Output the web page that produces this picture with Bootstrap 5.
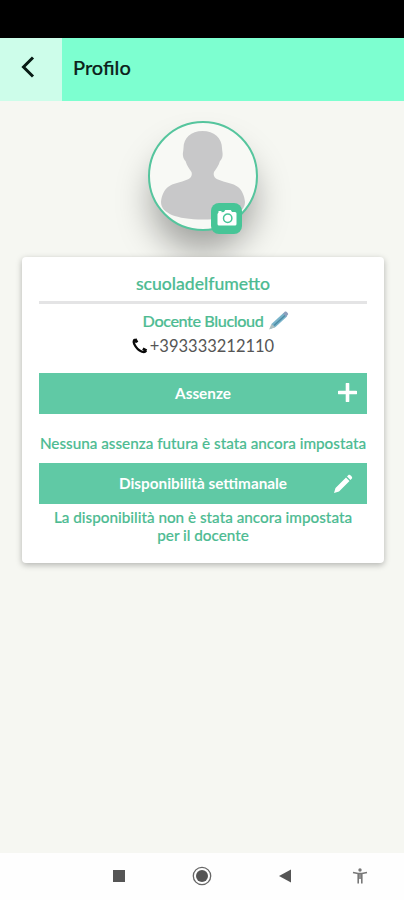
<!DOCTYPE html>
<html lang="it">
<head>
<meta charset="utf-8">
<meta name="viewport" content="width=device-width, initial-scale=1">
<title>Profilo</title>
<link href="https://cdn.jsdelivr.net/npm/bootstrap@5.3.0/dist/css/bootstrap.min.css" rel="stylesheet">
<style>
  body { font-family: Lato, "Open Sans", sans-serif; background: #f6f7f2; height: 900px; overflow: hidden; }
  svg { display: block; }
  .status-strip { height: 38px; background: #000; }
  .app-header { height: 62.5px; background: #7dffd0; }
  .back-btn { width: 62px; background: #cdfdea; border: 0; padding: 0 0 5px 19px; }
  .app-title { font-size: 20px; font-weight: 500; color: #0c211a; padding: 0 0 4px 11px; line-height: 24px; -webkit-text-stroke: .2px; }
  .avatar { width: 110px; height: 110px; margin: 20px 0 0 -2px; border: 2px solid #55c59d; background: #f8f9f5; box-shadow: 0 24px 34px -3px rgba(0,0,0,.34); }
  .photo-btn { width: 31px; height: 31px; left: 61px; top: 80px; background: #47c597; border: 0; border-radius: 8px; }
  .profile-card { margin: 26px 20px 0 22px; height: 306px; border: 0; border-radius: 4px; padding: 0 17px; background: #fff; box-shadow: 0 2px 6px rgba(0,0,0,.28); }
  .green { color: #4dbb92; }
  .school { font-size: 17.6px; font-weight: 500; line-height: 24px; padding: 15px 0 5px; border-bottom: 3px solid #e4e4e5; -webkit-text-stroke: .2px; }
  .teacher { font-size: 16.2px; letter-spacing: -.4px; font-weight: 500; line-height: 24px; margin-top: 5px; padding-left: 27px; -webkit-text-stroke: .2px; }
  .phone { font-size: 16.5px; line-height: 24px; color: #555; margin-top: 1px; padding-right: 1px; }
  .bar { height: 41px; background: #60c9a5; color: #fff; font-size: 15.3px; font-weight: 700; border: 0; border-radius: 0; }
  .bar svg { position: absolute; }
  .absences { margin-top: 15px; }
  .note { font-size: 15.28px; font-weight: 500; line-height: 18.500px; -webkit-text-stroke: .15px; }
  .note-absences { margin: 20px -10px 10.700px; }
  .note-week { margin-top: 4.300px; }
  .icon-plus { right: 10px; top: 10px; }
  .icon-edit { right: 14px; top: 11px; }
  .system-nav { height: 47px; background: #fefefe; padding: 0 0 1px 113px; }
</style>
</head>
<body class="d-flex flex-column">
<div class="status-strip flex-shrink-0"></div>
<header class="app-header d-flex flex-shrink-0">
  <button class="back-btn d-flex align-items-center" aria-label="Indietro">
    <svg width="18" height="24" viewBox="0 0 18 24"><path d="M14 2.500 4.500 12l9.500 9.500" fill="none" stroke="#071b14" stroke-width="3"/></svg>
  </button>
  <h1 class="app-title m-0 align-self-center">Profilo</h1>
</header>
<main class="flex-grow-1">
  <div class="d-flex justify-content-center ps-1">
    <div class="avatar rounded-circle position-relative">
      <svg width="106" height="106" viewBox="0 0 106 106">
        <path d="M52.500 8C41 8 33.500 15 33.500 25c0 3-1 5-.5 8 .4 2.500 1.500 4 2.500 5 1.500 5 4 8 6 11 1 3.500-.5 6-4 7.500-7 3-14.500 3.500-19.500 7.500-4 3-6.500 9-7 15 0 11 15 17.500 42 17.500S95 90 95 79c-.5-6-3-12-7-15-5-4-13-4.500-20-7.500-3.500-1.500-5-4-4-7.500 2-3 4.500-6 6-11 1-1 2.100-2.500 2.500-5 .5-3-.5-5-.5-8 0-10-8-17-19.500-17Z" fill="#c8c8c9"/>
      </svg>
      <button class="photo-btn position-absolute d-flex align-items-center justify-content-center p-0" aria-label="Cambia foto">
        <svg width="20" height="18" viewBox="0 0 20 18"><path d="M1.500 3.500V2h3v1.300L7 3l1.200-2h5.600L15 3h3a1.500 1.500 0 0 1 1.500 1.500V15a1.500 1.500 0 0 1-1.500 1.500H2A1.500 1.500 0 0 1 .5 15V5Z" fill="#fff"/><circle cx="10.700" cy="9.300" r="4.200" fill="none" stroke="#47c597" stroke-width="1.500"/></svg>
      </button>
    </div>
  </div>
  <section class="profile-card card text-center">
    <div class="school green">scuoladelfumetto</div>
    <div class="teacher green d-flex justify-content-center align-items-center"><span>Docente Blucloud</span>
      <svg class="ms-1" width="23" height="22" viewBox="0 0 23 22"><path d="m3 19 2-5.500L16.500 3 20 6.500 8.500 17Z" fill="#78b3ca"/><path d="M7 15.500 18.500 5" stroke="#4e8ca5" stroke-width="1.500"/><path d="m16 3.500 2-1.900c1-.8 3.800 1.800 3 3L19.200 6.800Z" fill="#8d9fbd"/><path d="m2 19.500 2.500-5.500 3.800 3.300Z" fill="#adbfc1"/></svg>
    </div>
    <div class="phone d-flex justify-content-center align-items-center">
      <svg width="19" height="18" viewBox="0 0 19 18"><path d="M4 2.500C2.500 3.500 2.300 5 3.200 7c1.800 3.800 4.200 6.300 7.800 7.700 1.800.7 3.300.3 4.200-.8" fill="none" stroke="#090909" stroke-width="2.200"/><path d="m4 2 2 3.500M11.800 11.800l3.700 2" fill="none" stroke="#090909" stroke-width="3"/></svg>
      <span>+393333212110</span>
    </div>
    <button class="bar absences position-relative w-100 p-0">Assenze
      <svg class="icon-plus" width="19" height="19" viewBox="0 0 19 19"><path d="M9.500 1v17M1 9.500h17" stroke="#fff" stroke-width="3.600" stroke-linecap="round"/></svg>
    </button>
    <div class="note note-absences green text-nowrap">Nessuna assenza futura è stata ancora impostata</div>
    <button class="bar position-relative w-100 p-0">Disponibilità settimanale
      <svg class="icon-edit" width="20" height="20" viewBox="0 0 20 20"><path d="m1 19 1.500-5L13 3.500l3.500 3.500L6 17.500Zm13-16.500L15.700.8c1-.8 4.200 2.200 3.400 3.400L17.500 6Z" fill="#fff"/></svg>
    </button>
    <div class="note note-week green text-nowrap">La disponibilità non è stata ancora impostata<br>per il docente</div>
  </section>
</main>
<nav class="system-nav flex-shrink-0 d-flex align-items-center">
  <svg width="12" height="12" viewBox="0 0 12 12"><path d="M0 0h12v12H0z" fill="#555"/></svg>
  <svg style="margin-left:67px" width="20" height="20" viewBox="0 0 20 20"><circle cx="10" cy="10" r="8.700" fill="none" stroke="#666" stroke-width="1.300"/><circle cx="10" cy="10" r="6" fill="#555"/></svg>
  <svg style="margin-left:67px" width="12" height="14" viewBox="0 0 12 14"><path d="M0 7 12 .5v13Z" fill="#555"/></svg>
  <svg style="margin-left:61px" width="16" height="16" viewBox="0 0 16 16"><circle cx="8" cy="2" r="1.700" fill="#777"/><path d="M1 4.500l5 1h4l5-1M6.200 5.500V15.500M9.800 5.500V15.500M8 5v6" fill="none" stroke="#777" stroke-width="1.600"/></svg>
</nav>
<script src="https://cdn.jsdelivr.net/npm/bootstrap@5.3.0/dist/js/bootstrap.bundle.min.js"></script>
</body>
</html>
